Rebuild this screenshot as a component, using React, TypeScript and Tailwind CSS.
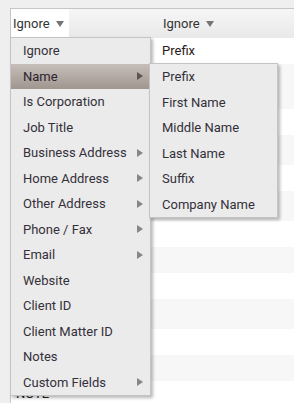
import React from 'react';

interface MenuItem {
  label: string;
  sub?: boolean;
}

const menuItems: MenuItem[] = [
  { label: 'Ignore' },
  { label: 'Name', sub: true },
  { label: 'Is Corporation' },
  { label: 'Job Title' },
  { label: 'Business Address', sub: true },
  { label: 'Home Address', sub: true },
  { label: 'Other Address', sub: true },
  { label: 'Phone / Fax', sub: true },
  { label: 'Email', sub: true },
  { label: 'Website' },
  { label: 'Client ID' },
  { label: 'Client Matter ID' },
  { label: 'Notes' },
  { label: 'Custom Fields', sub: true },
];

const nameItems = ['Prefix', 'First Name', 'Middle Name', 'Last Name', 'Suffix', 'Company Name'];

// row heights measured off the grid, stripes alternate white / light gray
const rows = [
  { h: 26, first: '', second: 'Prefix' },
  { h: 45, first: '', second: '' },
  { h: 26, first: '', second: '' },
  { h: 30, first: '', second: '' },
  { h: 26, first: '', second: '' },
  { h: 30, first: '', second: '' },
  { h: 26, first: '', second: '' },
  { h: 26, first: '', second: '' },
  { h: 26, first: '', second: '' },
  { h: 30, first: '', second: '' },
  { h: 26, first: '', second: '' },
  { h: 26, first: '', second: '' },
  { h: 30, first: 'NOTE', second: '' },
];

const Caret = () => (
  <svg width="8" height="6" viewBox="0 0 8 6" className="ml-[6px] mt-[1px]">
    <path d="M0 0 L8 0 L4 6 Z" fill="#747474" />
  </svg>
);

const SubArrow = ({ active }: { active?: boolean }) => (
  <svg width="6" height="8" viewBox="0 0 6 8">
    <path d="M0 0 L6 4 L0 8 Z" fill={active ? '#5f5353' : '#8a8585'} />
  </svg>
);

const App: React.FC = () => {
  return (
    <div
      className="w-[294px] h-[403px] overflow-hidden bg-[#efefef] pt-[8px] pl-[10px] text-[13px] text-[#333]"
      style={{ fontFamily: 'Roboto, "Liberation Sans", sans-serif' }}
    >
      <div className="relative border-t border-l border-[#c6c6c6] bg-white">
        {/* Header */}
        <div className="flex h-[29px] bg-gradient-to-b from-[#f6f6f6] to-[#e9e9e9]">
          <div className="w-[139px] flex">
            <div className="w-[58px] bg-white flex items-center pl-[2px]">
              <span>Ignore</span>
              <Caret />
            </div>
          </div>
          <div className="flex-1 flex items-center pl-[13px]">
            <span>Ignore</span>
            <Caret />
          </div>
        </div>

        {/* Rows */}
        {rows.map((r, i) => (
          <div
            key={i}
            className={`flex ${i % 2 === 0 ? 'bg-white' : 'bg-[#f7f7f7]'}`}
            style={{ height: r.h }}
          >
            <div className="w-[139px] pl-[5px] pt-[5px] text-[#222] leading-[16px]">{r.first}</div>
            <div className="flex-1 flex items-center pl-[12px] text-[#2a1a1a]">{r.second}</div>
          </div>
        ))}

        {/* Dropdown menu */}
        <div className="absolute left-[-1px] top-[28px] w-[141px] border border-[#c4c4c4] bg-[#ebebeb] shadow-[2px_2px_3px_rgba(0,0,0,0.28)]">
          {menuItems.map((m) => {
            const active = m.label === 'Name';
            return (
              <div
                key={m.label}
                className={`flex items-center justify-between h-[25.5px] pl-[12px] pr-[7px] ${
                  active ? 'bg-gradient-to-b from-[#c6beb9] to-[#a0968f] text-[#2e2530]' : 'text-[#34303a]'
                }`}
              >
                <span>{m.label}</span>
                {m.sub && <SubArrow active={active} />}
              </div>
            );
          })}

          {/* Name submenu */}
          <div className="absolute left-[138px] top-[25px] w-[129px] border border-[#c4c4c4] bg-[#ebebeb] shadow-[2px_2px_3px_rgba(0,0,0,0.28)]">
            {nameItems.map((n) => (
              <div key={n} className="flex items-center h-[25.5px] pl-[12px] text-[#34303a]">
                {n}
              </div>
            ))}
          </div>
        </div>
      </div>
    </div>
  );
};

export default App;
